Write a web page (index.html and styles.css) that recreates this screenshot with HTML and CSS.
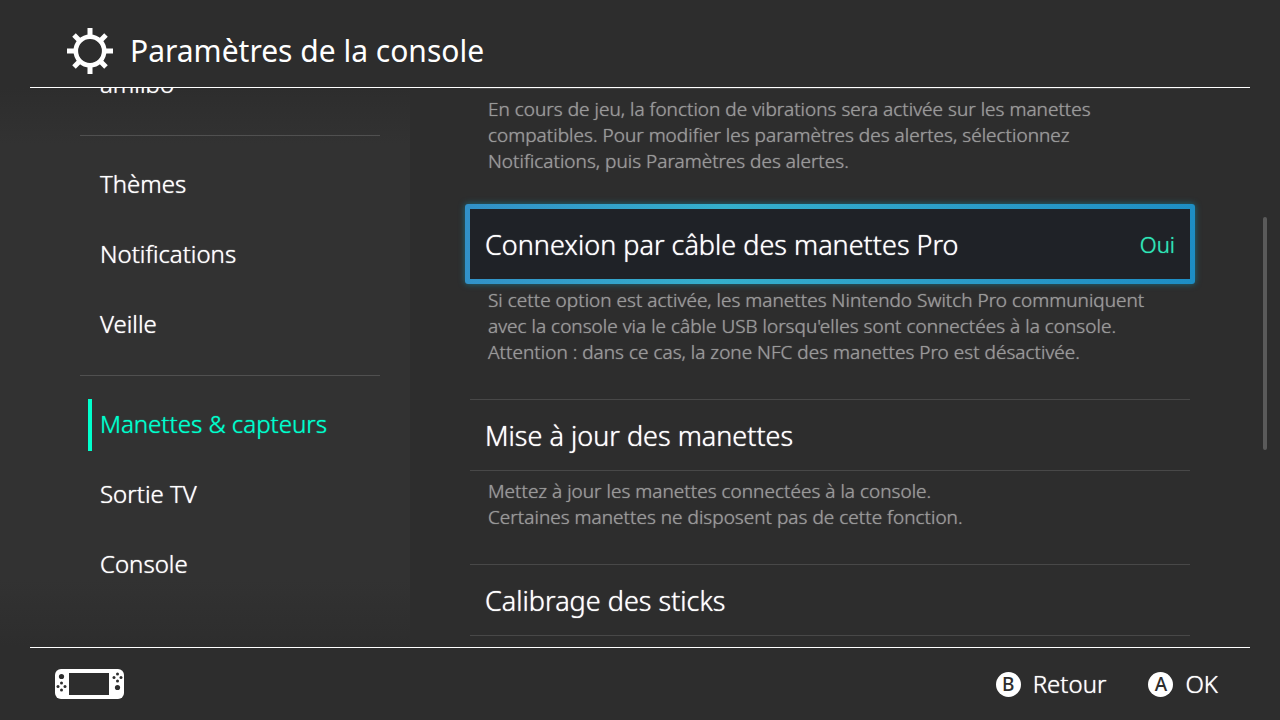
FILE: index.html
```html
<!doctype html>
<html lang="fr">
<head>
<meta charset="utf-8">
<title>Paramètres de la console</title>
<link rel="stylesheet" href="styles.css">
</head>
<body>

<header class="header">
	<svg class="gear" viewBox="0 0 48 48">
		<circle cx="24" cy="24" r="14.200" fill="none" stroke="#fff" stroke-width="4.600"/>
		<path d="M24 1v9M24 38v9M1 24h9M38 24h9M8 8l6.400 6.400M33.600 33.600l6.400 6.400M8 40l6.400-6.400M33.600 14.400l6.400-6.400" stroke="#fff" stroke-width="5"/>
	</svg>
	<h1>Paramètres de la console</h1>
</header>

<div class="main">
	<nav class="menu">
		<a href="#">amiibo</a>
		<hr>
		<a href="#">Thèmes</a>
		<a href="#">Notifications</a>
		<a href="#">Veille</a>
		<hr>
		<a href="#" class="active">Manettes &amp; capteurs</a>
		<a href="#">Sortie TV</a>
		<a href="#">Console</a>
	</nav>

	<main class="content">
		<p>En cours de jeu, la fonction de vibrations sera activée sur les manettes<br>
		compatibles. Pour modifier les paramètres des alertes, sélectionnez<br>
		Notifications, puis Paramètres des alertes.</p>

		<button class="row selected"><span>Connexion par câble des manettes Pro</span><span class="value">Oui</span></button>
		<p>Si cette option est activée, les manettes Nintendo Switch Pro communiquent<br>
		avec la console via le câble USB lorsqu'elles sont connectées à la console.<br>
		Attention : dans ce cas, la zone NFC des manettes Pro est désactivée.</p>

		<button class="row"><span>Mise à jour des manettes</span></button>
		<p>Mettez à jour les manettes connectées à la console.<br>
		Certaines manettes ne disposent pas de cette fonction.</p>

		<button class="row"><span>Calibrage des sticks</span></button>
	</main>
	<div class="scrollbar"></div>
</div>

<footer class="footer">
	<svg class="handheld" viewBox="0 0 70 30">
		<rect width="69" height="30" rx="6" fill="#fff"/>
		<g fill="#2d2d2d">
			<rect x="14" y="4" width="40" height="22"/>
			<circle cx="6.500" cy="7.500" r="2.600"/>
			<circle cx="6.500" cy="14" r="1.500"/>
			<circle cx="6.500" cy="21" r="1.500"/>
			<circle cx="3" cy="17.500" r="1.500"/>
			<circle cx="10" cy="17.500" r="1.500"/>
			<circle cx="62.500" cy="18.500" r="2.600"/>
			<circle cx="62.500" cy="5" r="1.500"/>
			<circle cx="62.500" cy="12" r="1.500"/>
			<circle cx="59" cy="8.500" r="1.500"/>
			<circle cx="66" cy="8.500" r="1.500"/>
		</g>
	</svg>
	<div class="keys">
		<button class="key"><span class="badge">B</span>Retour</button>
		<button class="key"><span class="badge">A</span>OK</button>
	</div>
</footer>

</body>
</html>
```
FILE: styles.css
```css
*{box-sizing:border-box;}
body{
	margin:0;
	height:100vh;
	display:flex;
	flex-direction:column;
	overflow:hidden;
	background:#2d2d2d;
	color:#fff;
	font-family:"Noto Sans","Open Sans",sans-serif;
	font-weight:300;
	text-shadow:0 0 1px;
}
button{margin:0;padding:0;border:0;background:none;color:inherit;font:inherit;text-shadow:inherit;cursor:pointer;}
a{color:inherit;text-decoration:none;}

.header{display:flex;align-items:center;gap:16px;height:88px;flex:none;margin:0 30px;padding:14px 36px 0;border-bottom:1px solid #fff;}
.header h1{margin:0;font-size:30px;font-weight:400;line-height:40px;text-shadow:none;}
.gear{width:48px;height:48px;}

.main{position:relative;flex:1;min-height:0;display:flex;overflow:hidden;}
.menu{width:410px;flex:none;padding:0 30px 0 80px;background:linear-gradient(#2d2d2d,#323232 10%,#323232 88%,#2d2d2d);}
.menu a{display:flex;align-items:center;height:70px;padding:0 0 3px 20px;font-size:24px;}
.menu a:first-child{margin-top:-38px;}
.menu hr{height:1px;margin:15px 0 14px;border:0;background:#505050;}
.menu .active{position:relative;color:#0fc;}
.menu .active:before{content:"";position:absolute;left:8px;top:9px;width:4px;height:52px;background:#0fc;}

.content{flex:1;padding:0 90px 0 60px;}
.content p{margin:0 0 34px;padding:7px 18px 0;font-size:19px;line-height:26px;color:#999;white-space:nowrap;}
.content p:first-child{border-top:1px solid #484848;}
.row{display:flex;align-items:center;justify-content:space-between;width:100%;height:72px;padding:0 15px;border:solid #484848;border-width:1px 0;font-size:27px;}
.selected{position:relative;border-color:transparent;background:#1f2227;}
.selected:before{content:"";position:absolute;inset:-5px;border-radius:3px;background:linear-gradient(100deg,#3190c8,#35b0cd 35%,#2a9bc8 70%,#1d8dc4);box-shadow:0 0 6px #1d6f80;}
.selected:after{content:"";position:absolute;inset:0;background:#1f2227;}
.selected span{position:relative;z-index:1;}
.value{font-size:22px;color:#2fe8b8;}
.scrollbar{position:absolute;right:13px;top:129px;width:4px;height:233px;border-radius:2px;background:#5a5a5a;}

.footer{display:flex;align-items:center;justify-content:space-between;height:73px;flex:none;margin:0 30px;padding:0 32px 0 25px;border-top:1px solid #fff;}
.handheld{width:70px;height:30px;}
.keys{display:flex;gap:42px;}
.key{display:flex;align-items:center;gap:12px;font-size:24px;line-height:30px;}
.badge{width:25px;height:25px;border-radius:50%;background:#fff;color:#2d2d2d;font-size:19px;font-weight:500;line-height:25px;text-align:center;text-shadow:none;}
```
